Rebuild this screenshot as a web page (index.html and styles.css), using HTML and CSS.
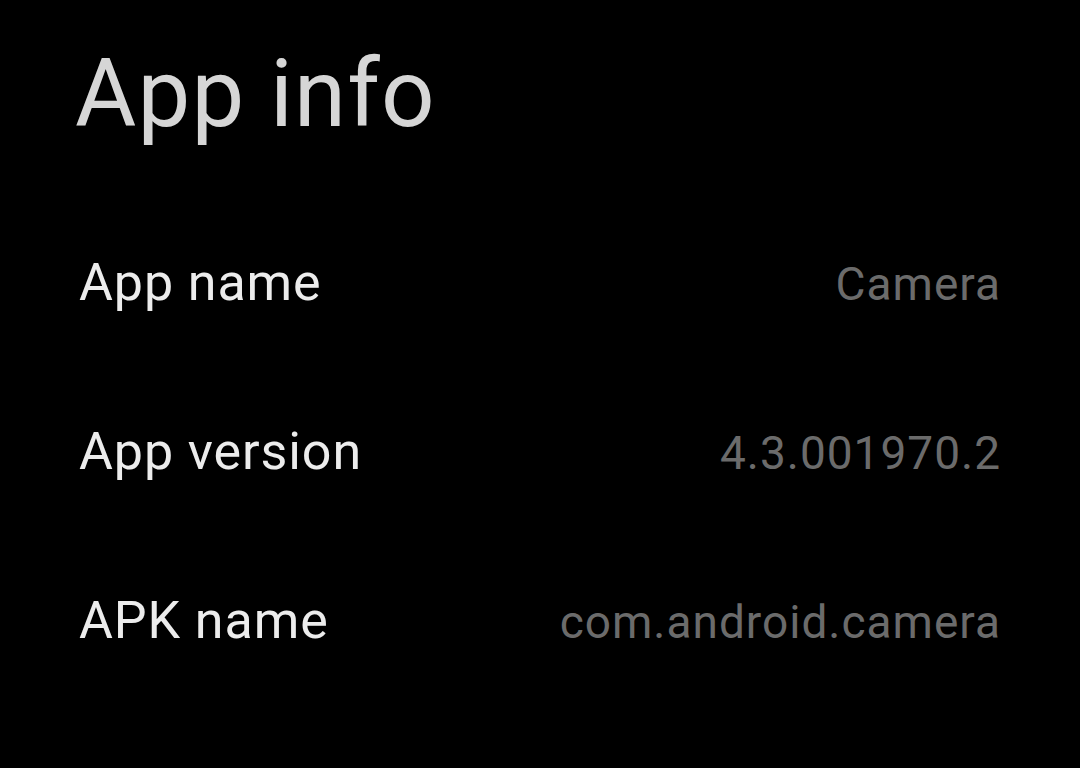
FILE: index.html
```html
<!DOCTYPE html>
<html>
<head>
<meta charset="utf-8">
<link rel="stylesheet" href="styles.css">
</head>
<body>
<div class="page">
  <h1 class="title">App info</h1>
  <div class="list">
    <div class="row"><span class="label">App name</span><span class="value">Camera</span></div>
    <div class="row"><span class="label">App version</span><span class="value">4.3.001970.2</span></div>
    <div class="row"><span class="label">APK name</span><span class="value">com.android.camera</span></div>
  </div>
</div>
</body>
</html>
```
FILE: styles.css
```css
html, body {
  margin: 0;
  padding: 0;
  background: #000;
  width: 1080px;
  height: 768px;
  overflow: hidden;
}
.page {
  font-family: Roboto, "Noto Sans", sans-serif;
  padding: 0 80px 0 75px;
}
.title {
  margin: 0;
  padding-top: 34px;
  font-size: 94px;
  font-weight: 400;
  line-height: 120px;
  color: #d6d6d6;
  letter-spacing: 1.2px;
}
.list {
  margin-top: 99px;
  padding-left: 4px;
}
.row {
  display: flex;
  justify-content: space-between;
  align-items: baseline;
  height: 169px;
  line-height: 60px;
}
.label {
  font-size: 52px;
  color: #ececec;
  letter-spacing: 0.9px;
}
.value {
  font-size: 46px;
  color: #6b6b6b;
  letter-spacing: 1px;
  margin-right: -1px;
}
```
